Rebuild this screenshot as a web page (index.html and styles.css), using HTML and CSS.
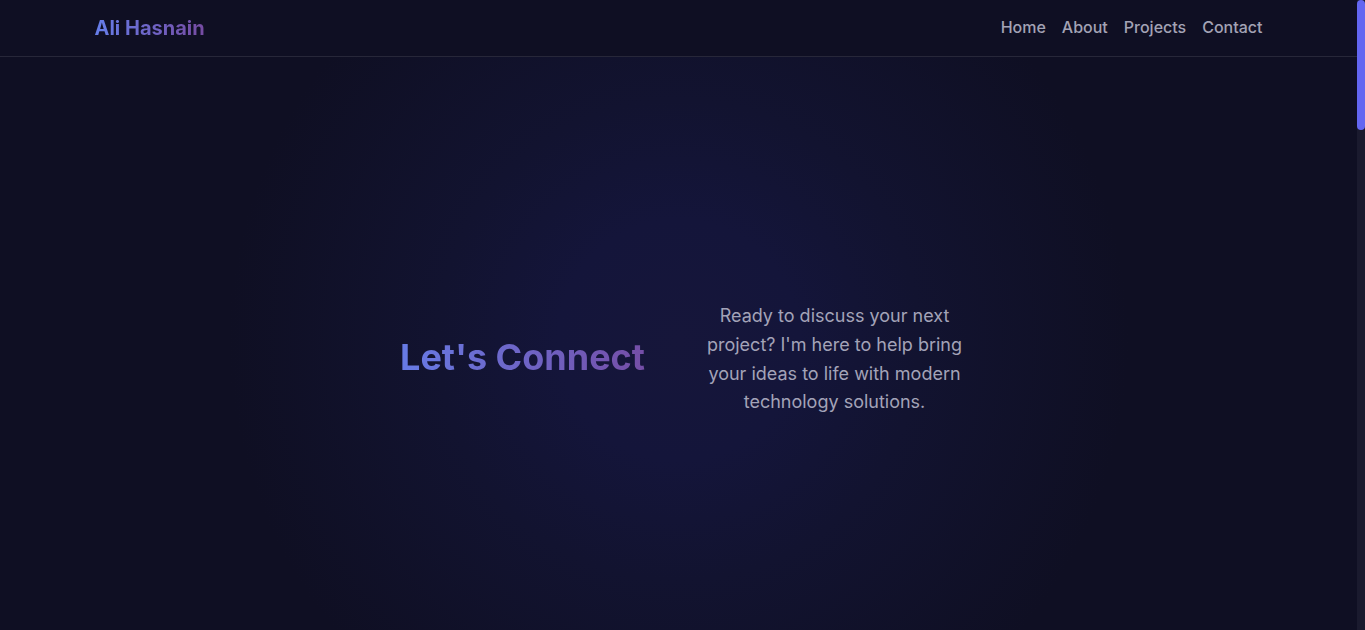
FILE: index.html
```html
<!DOCTYPE html>
<html lang="en">
<head>
<meta charset="UTF-8">
<title>Ali Hasnain</title>
<link rel="stylesheet" href="styles.css">
</head>
<body>
<div class="page">
  <header class="site-header">
    <div class="container header-inner">
      <a class="logo" href="#">Ali Hasnain</a>
      <nav class="nav">
        <a href="#">Home</a>
        <a href="#">About</a>
        <a href="#">Projects</a>
        <a href="#">Contact</a>
      </nav>
    </div>
  </header>
  <main>
    <section class="contact">
      <div class="contact-grid">
        <h2 class="contact-title">Let's Connect</h2>
        <p class="contact-text">Ready to discuss your next project? I'm here to help bring your ideas to life with modern technology solutions.</p>
      </div>
    </section>
  </main>
</div>
<div class="scroll-rail" aria-hidden="true"><div class="scroll-thumb"></div></div>
</body>
</html>
```
FILE: styles.css
```css
* { box-sizing: border-box; margin: 0; padding: 0; }
html, body { height: 100%; }
body {
  font-family: Inter, "Noto Sans", sans-serif;
  background: #0f0f23;
  color: #a0a0b8;
  display: flex;
  overflow: hidden;
}
.page { flex: 1; min-width: 0; height: 100%; overflow: hidden; }
.scroll-rail { width: 8px; flex: 0 0 8px; background: #1a1a2e; }
.scroll-thumb { height: 130px; background: #6366f1; border-radius: 4px; }
.container { max-width: 1200px; margin: 0 auto; padding: 0 16px; }
.site-header {
  height: 57px;
  border-bottom: 1px solid rgba(255,255,255,0.1);
  background: #0f0f23;
}
.header-inner {
  height: 56px;
  display: flex;
  align-items: center;
  justify-content: space-between;
}
.logo {
  font-size: 20px;
  font-weight: 700;
  text-decoration: none;
  background: linear-gradient(90deg, #667eea, #764ba2);
  -webkit-background-clip: text;
  background-clip: text;
  color: transparent;
}
.nav { display: flex; gap: 16px; margin-top: -2px; }
.nav a {
  color: #a3a3b5;
  text-decoration: none;
  font-size: 16px;
  font-weight: 500;
}
.contact {
  height: 602px;
  display: flex;
  align-items: center;
  justify-content: center;
  background: radial-gradient(circle at 50% 47%, #16163a 0px, #14153a 120px, #121330 240px, #0f0f23 450px, #0f0f23 100%);
}
.contact-grid {
  display: grid;
  grid-template-columns: 280px 280px;
  gap: 32px;
  align-items: center;
  text-align: center;
}
.contact-title {
  font-size: 36px;
  font-weight: 700;
  line-height: 1.2;
  background: linear-gradient(90deg, #667eea, #764ba2);
  -webkit-background-clip: text;
  background-clip: text;
  color: transparent;
}
.contact-text {
  font-size: 18px;
  line-height: 28.8px;
  color: #a3a3b8;
  padding-top: 3px;
}
```
